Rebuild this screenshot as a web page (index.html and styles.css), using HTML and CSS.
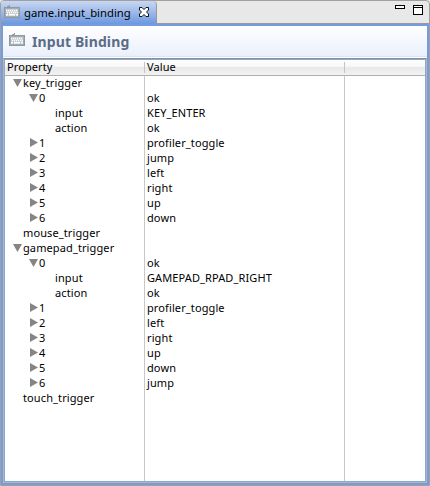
FILE: index.html
```html
<!DOCTYPE html>
<html lang="en">
<head>
<meta charset="utf-8">
<title>game.input_binding</title>
<link rel="stylesheet" href="styles.css">
</head>
<body>
<svg width="0" height="0" class="defs">
  <symbol id="keyboard" viewBox="0 0 16 14">
    <path d="M3.5 3V1.5H5.5V0" fill="none" stroke="#8b959b"/>
    <rect x=".5" y="2.5" width="15" height="10" fill="#a3adb2" stroke="#8f999f"/>
    <rect x="2" y="4" width="12" height="7" fill="#c3cacd"/>
    <path d="M2 5.5H14M3 7.5H14" stroke="#fff" stroke-width="1.4" stroke-dasharray="1.2 .8"/>
    <path d="M2 9.8H4M5 9.8H11M12 9.8H14" stroke="#fff" stroke-width="1.4"/>
  </symbol>
</svg>
<div class="window">
  <div class="tabbar">
    <div class="tab">
      <svg class="kb"><use href="#keyboard"/></svg>
      <span class="tab-title">game.input_binding</span>
      <svg class="close" viewBox="0 0 10 10"><path d="M.5 .5H3L5 2.5 7 .5H9.5V3L7.5 5 9.5 7V9.5H7L5 7.5 3 9.5H.5V7L2.5 5 .5 3Z" fill="#fff" stroke="#111"/></svg>
    </div>
    <div class="controls"><i class="minimize"></i><i class="maximize"></i></div>
  </div>
  <div class="view">
    <div class="heading"><svg class="kb"><use href="#keyboard"/></svg><h1>Input Binding</h1></div>
    <div class="table">
      <div class="thead"><div>Property</div><div>Value</div><div></div></div>
      <div class="tbody">
        <div class="names">
          <div class="row l1"><i class="down"></i>key_trigger</div>
          <div class="row l2"><i class="down"></i>0</div>
          <div class="row l3">input</div>
          <div class="row l3">action</div>
          <div class="row l2"><i class="right"></i>1</div>
          <div class="row l2"><i class="right"></i>2</div>
          <div class="row l2"><i class="right"></i>3</div>
          <div class="row l2"><i class="right"></i>4</div>
          <div class="row l2"><i class="right"></i>5</div>
          <div class="row l2"><i class="right"></i>6</div>
          <div class="row l1"><i></i>mouse_trigger</div>
          <div class="row l1"><i class="down"></i>gamepad_trigger</div>
          <div class="row l2"><i class="down"></i>0</div>
          <div class="row l3">input</div>
          <div class="row l3">action</div>
          <div class="row l2"><i class="right"></i>1</div>
          <div class="row l2"><i class="right"></i>2</div>
          <div class="row l2"><i class="right"></i>3</div>
          <div class="row l2"><i class="right"></i>4</div>
          <div class="row l2"><i class="right"></i>5</div>
          <div class="row l2"><i class="right"></i>6</div>
          <div class="row l1"><i></i>touch_trigger</div>
        </div>
        <div class="values">
          <div class="row"></div>
          <div class="row">ok</div>
          <div class="row">KEY_ENTER</div>
          <div class="row">ok</div>
          <div class="row">profiler_toggle</div>
          <div class="row">jump</div>
          <div class="row">left</div>
          <div class="row">right</div>
          <div class="row">up</div>
          <div class="row">down</div>
          <div class="row"></div>
          <div class="row"></div>
          <div class="row">ok</div>
          <div class="row">GAMEPAD_RPAD_RIGHT</div>
          <div class="row">ok</div>
          <div class="row">profiler_toggle</div>
          <div class="row">left</div>
          <div class="row">right</div>
          <div class="row">up</div>
          <div class="row">down</div>
          <div class="row">jump</div>
          <div class="row"></div>
        </div>
        <div></div>
      </div>
    </div>
  </div>
</div>
</body>
</html>
```
FILE: styles.css
```css
* { box-sizing: border-box; }
body { margin: 0; background: #e8e8e8; font: 11px/15px "Noto Sans", sans-serif; color: #000; overflow: hidden; }
.defs { display: none; }
.window { width: 430px; height: 486px; border: 1px solid #a0a0a0; border-radius: 4px 4px 0 0; background: #e8e8e8; display: flex; flex-direction: column; overflow: hidden; }
.tabbar { height: 23px; flex: none; display: flex; justify-content: space-between; background: linear-gradient(#999, #999) bottom / 100% 1px no-repeat; }
.tab { width: 156px; height: 23px; display: flex; border-right: 1px solid #999; border-radius: 0 4px 0 0; background: linear-gradient(#c9d8f3, #6e98df); }
.kb { width: 16px; height: 14px; flex: none; }
.tab .kb { margin: 4px 0 0 3px; }
.tab-title { width: 107px; margin: 4px 0 0 4px; font-size: 11.3px; white-space: nowrap; }
.close { width: 10px; height: 10px; margin: 6px 0 0 8px; flex: none; }
.controls { display: flex; gap: 8px; padding: 4px 6px 0 0; }
.minimize { width: 10px; height: 4px; border: 1px solid #000; background: #fff; }
.maximize { width: 10px; height: 10px; border: 1px solid #000; background: linear-gradient(#000, #000) 0 1px / 100% 1px no-repeat #fff; }
.view { flex: 1; display: flex; flex-direction: column; padding: 2px 0 2px 2px; background: #739ce2; border-right: 2px solid #739ce2; }
.heading { height: 32px; flex: none; display: flex; background: linear-gradient(#fff, #eaf0fb 30px, #dce5f5 30px, #dce5f5 31px, #fff 31px); }
.heading .kb { margin: 7px 0 0 6px; }
h1 { margin: 6px 0 0 7px; font: bold 14px/20px "Noto Sans", sans-serif; letter-spacing: .12px; color: #5b6c87; white-space: nowrap; }
.table { flex: 1; min-height: 0; border: 1px solid #b4b4b4; border-top-color: #8f8f8f; box-shadow: inset 0 0 0 1px #8aa9cb, inset 0 1px #aaa; padding: 1px; background: #fff; display: flex; flex-direction: column; }
.thead, .tbody { display: grid; grid-template-columns: 140px 200px 1fr; }
.thead { height: 16px; flex: none; line-height: 13px; letter-spacing: .1px; background: linear-gradient(#fff, #f6f6f6 48%, #e9e9e9 50%, #f2f2f2); border-bottom: 1px solid #b0b0b0; }
.thead > div { padding-left: 2px; background: linear-gradient(#c4c4c4, #c4c4c4) right 2px / 1px 11px no-repeat; }
.thead > div:last-child { background: none; }
.tbody { flex: 1; }
.names, .values { border-right: 1px solid #c8c8c8; }
.row { height: 15px; display: flex; line-height: 13px; letter-spacing: .11px; white-space: nowrap; }
.values .row { padding-left: 2px; }
.l1 { padding-left: 8px; }
.l2 { padding-left: 24px; }
.l3 { padding-left: 50px; }
.row i { width: 10px; flex: none; }
.row i::before { content: ""; display: block; background: #858585; }
.row .down::before { width: 9px; height: 8px; margin-top: 3px; clip-path: polygon(0 0, 100% 0, 50% 100%); }
.row .right::before { width: 8px; height: 9px; margin: 2px 0 0 1px; clip-path: polygon(0 0, 100% 50%, 0 100%); }
.row i:not([class])::before { display: none; }
```
